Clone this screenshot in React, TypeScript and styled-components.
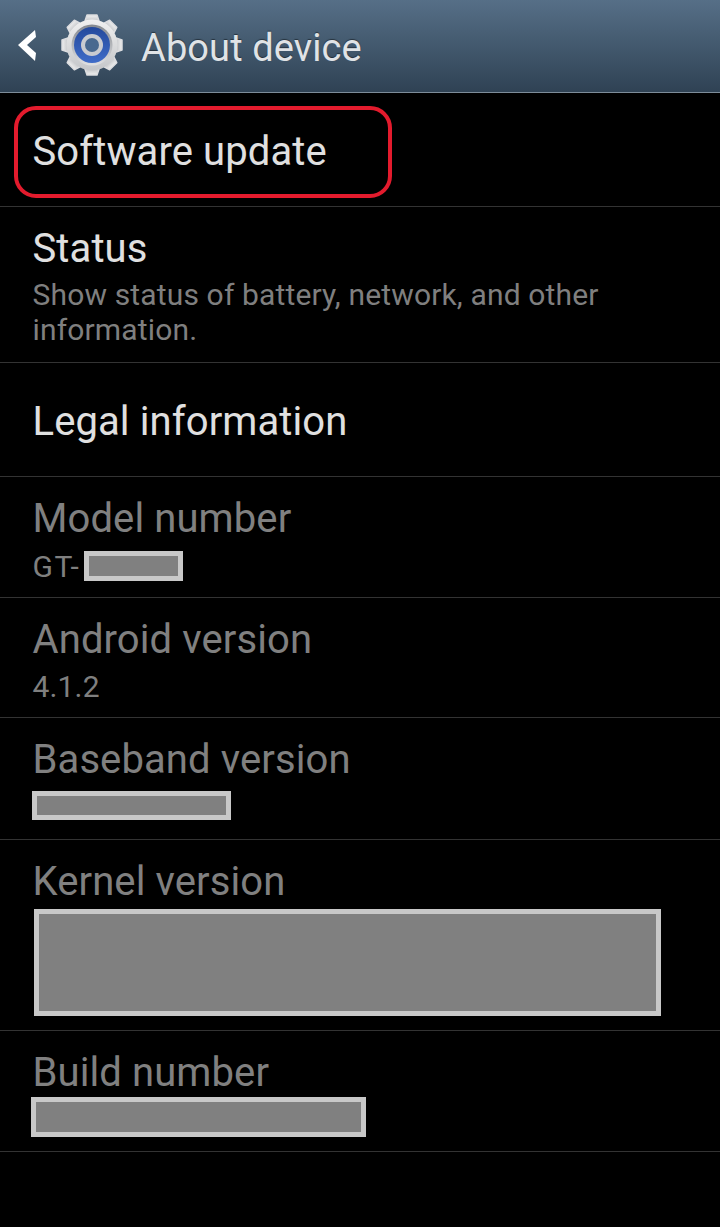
import React from 'react';
import styled, { createGlobalStyle } from 'styled-components';

const GlobalStyle = createGlobalStyle`
  html, body {
    margin: 0;
    padding: 0;
    background: #000;
  }
`;

const Screen = styled.div`
  width: 720px;
  height: 1227px;
  background: #000;
  overflow: hidden;
  font-family: Roboto, "Liberation Sans", sans-serif;
`;

const ActionBar = styled.header`
  height: 92px;
  display: flex;
  align-items: center;
  padding-left: 17px;
  background: linear-gradient(#566f87, #2f4254);
  border-bottom: 1px solid #7d8c99;
`;

const Title = styled.h1`
  margin: 3px 0 0 17px;
  font-size: 38px;
  font-weight: 400;
  color: #e0e3e6;
  letter-spacing: 0.1px;
  text-shadow: 0 -1px 1px rgba(0, 0, 0, 0.45);
`;

const BackSvg = styled.svg`
  margin-bottom: 2px;
`;

const GearSvg = styled.svg`
  margin: 0 0 2px 21px;
`;

const Row = styled.div<{ $height: number; $top?: number }>`
  position: relative;
  box-sizing: border-box;
  height: ${p => p.$height}px;
  padding: ${p => p.$top || 18}px 0 0 32.5px;
  border-bottom: 1px solid #333;
`;

const RowTitle = styled.div<{ $disabled?: boolean }>`
  font-size: 40px;
  line-height: 48px;
  letter-spacing: 0.1px;
  color: ${p => (p.$disabled ? '#808080' : '#e0e0e0')};
`;

const Summary = styled.div`
  margin-top: 4px;
  font-size: 30px;
  line-height: 35px;
  letter-spacing: 0.15px;
  color: #7f7f7f;
`;

const ValueLine = styled.div<{ $spacing?: number; $height?: number }>`
  display: flex;
  align-items: center;
  height: ${p => p.$height || 46}px;
  font-size: 30px;
  letter-spacing: ${p => p.$spacing || 0.15}px;
  color: #7f7f7f;
`;

const Redacted = styled.span<{ $width: number; $height: number; $shift?: number; $drop?: number }>`
  display: block;
  box-sizing: border-box;
  width: ${p => p.$width}px;
  height: ${p => p.$height}px;
  margin-left: ${p => p.$shift || 0}px;
  margin-top: ${p => p.$drop || 0}px;
  background: #808080;
  border: 5px solid #c8c8c8;
`;

const Highlight = styled.div`
  position: absolute;
  left: 14px;
  top: 13px;
  width: 378px;
  height: 92px;
  box-sizing: border-box;
  border: 4px solid #e31b2d;
  border-radius: 22px;
`;

const BackIcon = () => (
  <BackSvg width="22" height="33" viewBox="0 0 22 33">
    <polygon points="1,16 18,1 19,8 10,16 19,24 18,32" fill="#fff" />
  </BackSvg>
);

const teeth = [0, 45, 90, 135, 180, 225, 270, 315];

const GearIcon = () => (
  <GearSvg width="64" height="64" viewBox="-32 -32 64 64">
    <defs>
      <linearGradient id="steel" x1="0" y1="0" x2="0" y2="1">
        <stop offset="0" stopColor="#f0f0f0" />
        <stop offset="1" stopColor="#c4c6c9" />
      </linearGradient>
      <linearGradient id="rim" x1="0" y1="0" x2="0" y2="1">
        <stop offset="0" stopColor="#85898f" />
        <stop offset="1" stopColor="#e0e1e3" />
      </linearGradient>
      <linearGradient id="blue" x1="0" y1="0" x2="0" y2="1">
        <stop offset="0" stopColor="#24499c" />
        <stop offset="1" stopColor="#3f6cc8" />
      </linearGradient>
    </defs>
    {teeth.map(a => (
      <path
        key={a}
        d="M-7 -24 L-5 -30 H5 L7 -24 Z"
        fill="url(#steel)"
        stroke="#dcdde0"
        strokeWidth="1.5"
        strokeLinejoin="round"
        transform={`rotate(${a})`}
      />
    ))}
    <circle r="25.5" fill="url(#steel)" />
    <circle r="20.5" fill="url(#rim)" />
    <circle r="18" fill="url(#blue)" />
    <circle r="11" fill="#c9cbd0" />
    <circle r="7" fill="#48688f" />
  </GearSvg>
);

const App = () => {
  return (
    <Screen>
      <GlobalStyle />
      <ActionBar>
        <BackIcon />
        <GearIcon />
        <Title>About device</Title>
      </ActionBar>
      <Row $height={114} $top={35}>
        <RowTitle>Software update</RowTitle>
        <Highlight />
      </Row>
      <Row $height={156}>
        <RowTitle>Status</RowTitle>
        <Summary>
          Show status of battery, network, and other
          <br />
          information.
        </Summary>
      </Row>
      <Row $height={114} $top={35}>
        <RowTitle>Legal information</RowTitle>
      </Row>
      <Row $height={121}>
        <RowTitle $disabled>Model number</RowTitle>
        <ValueLine $spacing={1.5}>
          GT-
          <Redacted $width={99} $height={30} $shift={4} />
        </ValueLine>
      </Row>
      <Row $height={120}>
        <RowTitle $disabled>Android version</RowTitle>
        <ValueLine $height={44}>4.1.2</ValueLine>
      </Row>
      <Row $height={122}>
        <RowTitle $disabled>Baseband version</RowTitle>
        <Redacted $width={199} $height={29} $shift={-0.5} $drop={7} />
      </Row>
      <Row $height={191}>
        <RowTitle $disabled>Kernel version</RowTitle>
        <Redacted $width={627} $height={107} $shift={1.5} $drop={3} />
      </Row>
      <Row $height={121}>
        <RowTitle $disabled>Build number</RowTitle>
        <Redacted $width={335} $height={40} $shift={-1.5} />
      </Row>
    </Screen>
  );
};

export default App;
